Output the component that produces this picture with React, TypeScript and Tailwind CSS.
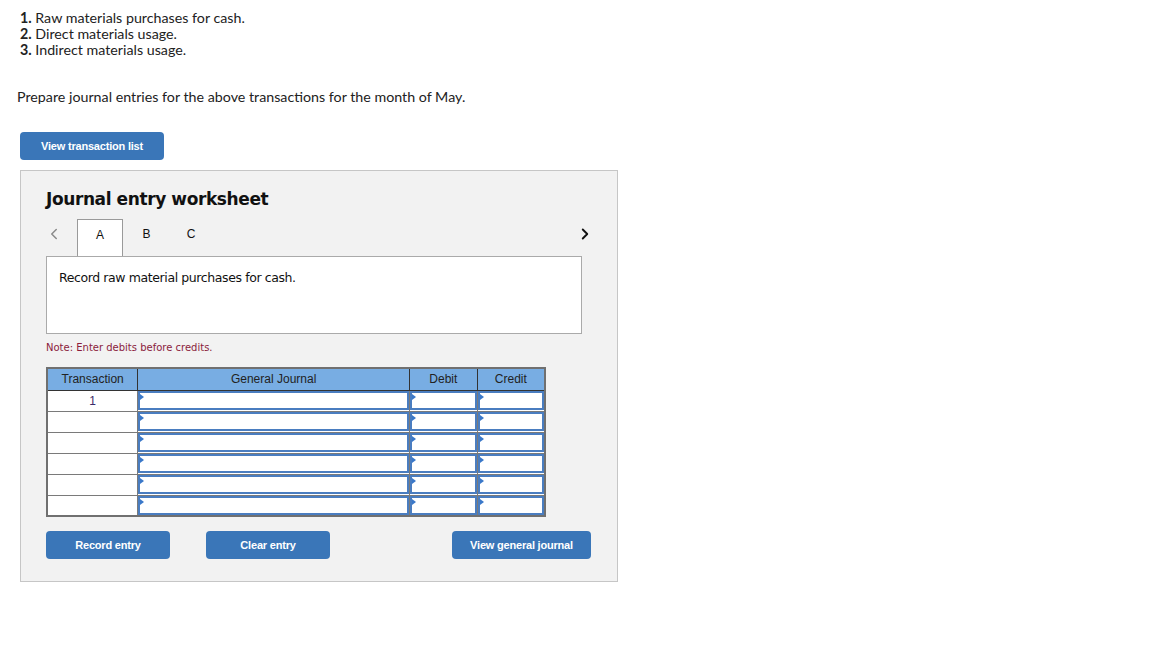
import { ChevronLeft, ChevronRight } from "lucide-react";

const rows = [1, 2, 3, 4, 5, 6];

const InputCell = () => (
    <td className="border border-[#7a7a7a] p-0">
        <div className="relative h-[19px] border-2 border-[#4a7dc0] bg-white">
            <span className="absolute top-[1px] left-0 h-0 w-0 border-y-[3px] border-l-[4px] border-y-transparent border-l-[#3a78c9]" />
        </div>
    </td>
);

const App = () => {
    return (
        <div className="min-h-screen bg-white font-['Lato',sans-serif] text-[#222]">
            <div className="px-5 pt-[10px]">
                <ol className="text-[14.25px] leading-4">
                    <li>
                        <span className="font-bold">1.</span> Raw materials purchases for cash.
                    </li>
                    <li>
                        <span className="font-bold">2.</span> Direct materials usage.
                    </li>
                    <li>
                        <span className="font-bold">3.</span> Indirect materials usage.
                    </li>
                </ol>
                <p className="-ml-[3px] mt-[31px] text-[14.25px] leading-4">
                    Prepare journal entries for the above transactions for the month of May.
                </p>
                <button
                    type="button"
                    className="mt-[27px] h-7 w-36 rounded-sm bg-[#3a76b8] font-['Liberation_Sans',sans-serif] text-[11px] font-bold tracking-[-0.2px] text-white"
                >
                    View transaction list
                </button>

                <div className="mt-[10px] w-[598px] border border-[#c6c6c6] bg-[#f2f2f2] px-[25px] pt-[16px] pb-[22px]">
                    <h2 className="font-['DejaVu_Sans',sans-serif] text-[17px] leading-6 font-bold tracking-[-0.4px] text-[#111]">
                        Journal entry worksheet
                    </h2>

                    <div className="mt-[9px] flex h-[36px] items-start pt-[5px]">
                        <ChevronLeft size={18} strokeWidth={2} className="ml-[-1px] text-[#8a8a8a]" />
                        <div className="-mt-[6px] -mb-px ml-[14px] flex h-[37px] w-[46px] items-start justify-center border border-b-0 border-[#9a9a9a] bg-white pt-[6px] font-['Liberation_Sans',sans-serif] text-[12px] text-[#111]">
                            A
                        </div>
                        <div className="w-[47px] text-center font-['Liberation_Sans',sans-serif] text-[12px] text-[#111]">B</div>
                        <div className="w-[42px] text-center font-['Liberation_Sans',sans-serif] text-[12px] text-[#111]">C</div>
                        <ChevronRight size={18} strokeWidth={2.5} className="ml-auto mr-[-2px] text-[#111]" />
                    </div>

                    <div className="h-[78px] w-[536px] border border-[#aaaaaa] bg-white px-[12px] pt-[12px]">
                        <p className="font-['DejaVu_Sans',sans-serif] text-[12.5px] tracking-[-0.4px] text-[#111]">
                            Record raw material purchases for cash.
                        </p>
                    </div>

                    <p className="mt-[6px] font-['DejaVu_Sans',sans-serif] text-[10px] text-[#8b1c3c]">
                        Note: Enter debits before credits.
                    </p>

                    <table className="mt-[12px] w-[500px] border-collapse border-2 border-[#707070] font-['Liberation_Sans',sans-serif] text-[12px]">
                        <thead>
                            <tr className="h-[22px] bg-[#78ade3] text-[#222]">
                                <th className="w-[91px] border border-[#333] font-normal">Transaction</th>
                                <th className="w-[273px] border border-[#333] font-normal">General Journal</th>
                                <th className="w-[68px] border border-[#333] font-normal">Debit</th>
                                <th className="w-[68px] border border-[#333] font-normal">Credit</th>
                            </tr>
                        </thead>
                        <tbody>
                            {rows.map((r) => (
                                <tr key={r} className="h-[21px] bg-white">
                                    <td className="border border-[#7a7a7a] text-center align-middle text-[#3a2a6a]">
                                        {r === 1 ? "1" : ""}
                                    </td>
                                    <InputCell />
                                    <InputCell />
                                    <InputCell />
                                </tr>
                            ))}
                        </tbody>
                    </table>

                    <div className="mt-[14px] flex font-['Liberation_Sans',sans-serif] text-[11px] font-bold tracking-[-0.2px] text-white">
                        <button type="button" className="h-7 w-[124px] rounded-sm bg-[#3a76b8]">
                            Record entry
                        </button>
                        <button type="button" className="ml-9 h-7 w-[124px] rounded-sm bg-[#3a76b8]">
                            Clear entry
                        </button>
                        <button type="button" className="ml-auto mr-[1px] h-7 w-[139px] rounded-sm bg-[#3a76b8]">
                            View general journal
                        </button>
                    </div>
                </div>
            </div>
        </div>
    );
};

export default App;
